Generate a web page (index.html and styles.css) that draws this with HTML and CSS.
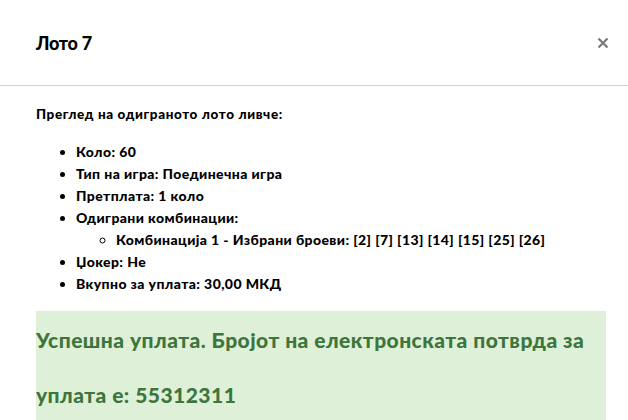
FILE: index.html
```html
<!DOCTYPE html>
<html lang="mk">
<head>
<meta charset="utf-8">
<title>Лото 7</title>
<link rel="stylesheet" href="styles.css">
</head>
<body>
<div class="modal">
  <div class="modal-header">
    <h4 class="modal-title">Лото 7</h4>
    <button class="close" type="button" aria-label="Close">
      <svg width="12" height="12" viewBox="0 0 12 12"><path d="M1.5 1.5 L10.5 10.5 M10.5 1.5 L1.5 10.5" stroke="#7a7a7a" stroke-width="2.2" stroke-linecap="butt"/></svg>
    </button>
  </div>
  <div class="modal-body">
    <p class="intro">Преглед на одиграното лото ливче:</p>
    <ul class="details">
      <li>Коло: 60</li>
      <li>Тип на игра: Поединечна игра</li>
      <li>Претплата: 1 коло</li>
      <li>Одиграни комбинации:
        <ul class="combos">
          <li>Комбинација 1 - Избрани броеви: [2] [7] [13] [14] [15] [25] [26]</li>
        </ul>
      </li>
      <li>Џокер: Не</li>
      <li>Вкупно за уплата: 30,00 МКД</li>
    </ul>
    <div class="alert-success">Успешна уплата. Бројот на електронската потврда за уплата е: 55312311</div>
  </div>
</div>
</body>
</html>
```
FILE: styles.css
```css
html, body {
  margin: 0;
  padding: 0;
  background: #fff;
}
body {
  font-family: "Lato", "Noto Sans", sans-serif;
  color: #000;
  overflow: hidden;
}
.modal {
  width: 628px;
}
.modal-header {
  display: flex;
  align-items: center;
  justify-content: space-between;
  height: 86px;
  box-sizing: border-box;
  padding: 0 19px 0 36px;
  border-bottom: 1px solid #d2d2d2;
}
.modal-title {
  margin: 0;
  font-size: 18px;
  font-weight: 900;
  letter-spacing: -0.3px;
}
.close {
  border: 0;
  background: none;
  padding: 0;
  width: 12px;
  height: 12px;
  display: flex;
}
.modal-body {
  padding: 0 22px 0 36px;
}
.intro {
  margin: 0;
  padding-top: 19px;
  font-size: 13.5px;
  line-height: 18px;
  font-weight: 900;
  letter-spacing: 0.6px;
}
.details {
  margin: 18px 0 0;
  padding-left: 40px;
  font-size: 14px;
  line-height: 22px;
  font-weight: 900;
  letter-spacing: 0.4px;
}
.combos {
  margin: 0;
  padding-left: 40px;
  list-style-type: circle;
}
.alert-success {
  margin-top: 16px;
  padding-top: 2px;
  background: #dff0d8;
  color: #3c763d;
  font-size: 21px;
  line-height: 54.5px;
  font-weight: 900;
  letter-spacing: 0.45px;
  height: 120px;
}
```
